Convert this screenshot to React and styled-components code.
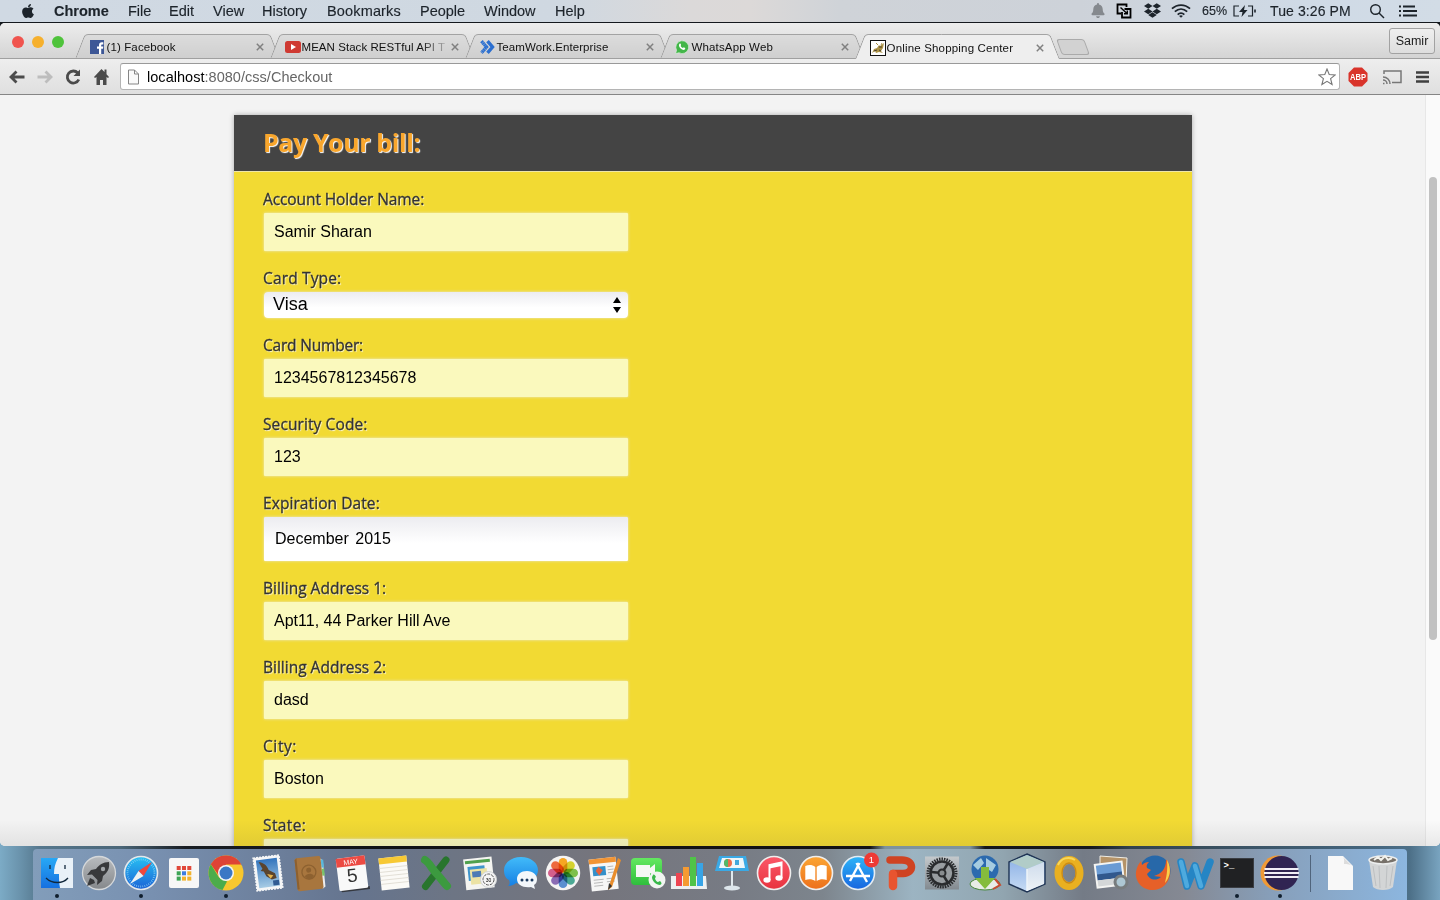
import React from "react";
import styled, { createGlobalStyle } from "styled-components";
import { FaApple, FaDropbox, FaBell } from "react-icons/fa";

const Global = createGlobalStyle`
  *, *::before, *::after { box-sizing: border-box; }
  body { margin: 0; overflow: hidden; font-family: "Liberation Sans", Arial, sans-serif; }
`;

/* ---------- desktop ---------- */
const Desktop = styled.div`
  width: 1440px; height: 900px; overflow: hidden;
  display: flex; flex-direction: column;
  background:
    linear-gradient(#15191e, #15191e) 0 0 / 100% 60px no-repeat,
    linear-gradient(90deg, #7cabc6 0, #6a93ac 20px, #55778d 40px, #4a6678 120px, #171c22 185px, #101216 400px, #131214 870px, #7e939d 885px, #7e939d 970px, #14161a 985px, #15181c 1090px, #31434f 1130px, #456780 1380px, #4d7088 1410px, #79a4c0 1440px);
`;

/* ---------- menu bar ---------- */
const MenuBar = styled.header`
  height: 23px; flex: none; display: flex; align-items: center; padding: 0 22px 1px 20px;
  color: #1d242b; border-bottom: 1px solid #15191e; font-size: 14.5px; white-space: nowrap;
  -webkit-text-stroke: .15px;
  background: linear-gradient(90deg, #d0d9e3 0, #cfd8e1 560px, #dbd9d9 690px, #dcd9d8 750px, #cfd3d8 840px, #cdd2d9 1080px, #cfdae6 1300px, #d2dce6 1440px);
`;
const AppleMark = styled.span`
  display: flex; width: 34px; font-size: 16px;
`;
const MenuItem = styled.span`
  width: ${(p) => p.$w}px; font-weight: ${(p) => (p.$strong ? 700 : 400)};
  letter-spacing: ${(p) => p.$ls || 0}px;
`;
const StatusArea = styled.div`
  margin-left: auto; display: flex; align-items: center;
  svg { display: block; }
`;
const Status = styled.span`
  display: flex; align-items: center; margin-left: ${(p) => p.$gap}px; width: ${(p) => p.$w}px;
  font-size: ${(p) => p.$size || 14}px; letter-spacing: ${(p) => p.$ls || 0}px; color: ${(p) => p.$color || "#1d242b"};
`;

/* ---------- browser window ---------- */
const Window = styled.main`
  height: 823px; flex: none; display: flex; flex-direction: column; background: #f3f3f3;
  border-radius: 5px; overflow: hidden;
`;
const TabStrip = styled.div`
  height: 36px; flex: none; display: flex; align-items: flex-end; padding: 0 5px 0 12px;
  background: linear-gradient(#ededed, #d4d4d4); border-bottom: 1px solid #a0a0a0;
`;
const Lights = styled.div`
  display: flex; gap: 8px; width: 67.5px; height: 22px;
`;
const Light = styled.i`
  width: 12px; height: 12px; border-radius: 50%; background: ${(p) => p.$c};
`;
const Tab = styled.div`
  width: 195px; height: ${(p) => (p.$active ? 25 : 24)}px; margin-bottom: ${(p) => (p.$active ? -1 : 0)}px;
  padding: 2px 7px 0 10px;
  display: flex; align-items: center; font-size: 11.5px; color: #111;
  position: relative; z-index: ${(p) => (p.$active ? 2 : 1)}; white-space: nowrap;
  &::before, &::after {
    content: ""; position: absolute; z-index: -1; top: 0; bottom: 0; width: 56%;
    background: ${(p) => (p.$active ? "#eeeeee" : "linear-gradient(#dcdcdc, #cfcfcf)")};
    border-top: 1px solid #a3a3a3;
  }
  &::before { left: 0; border-left: 1px solid #999; transform: skewX(-21deg); border-top-left-radius: 4px; }
  &::after { right: -1px; border-right: 1px solid #999; transform: skewX(21deg); border-top-right-radius: 4px; }
`;
const TabIcon = styled.span`
  width: 17px; height: 16px; flex: none; display: flex; align-items: center;
`;
const TabTitle = styled.span`
  flex: 1; letter-spacing: ${(p) => p.$ls}px;
  ${(p) => p.$fade && "mask-image: linear-gradient(90deg, #000 118px, transparent 150px);"}
`;
const TabClose = styled.span`
  flex: none; width: 17px; display: flex; justify-content: center; padding-left: 1px;
`;
const NewTab = styled.i`
  width: 28px; height: 16px; margin: 0 0 3px 4px; border: 1px solid #aaa; border-radius: 3px;
  background: #d2d2d2; transform: skewX(20deg);
`;
const Profile = styled.button`
  margin-left: auto; margin-bottom: 4px; width: 46px; height: 26px; padding: 0; border: 1px solid #a2a2a2; border-radius: 3px;
  background: linear-gradient(#efefef, #dedede); font: 12.5px "Liberation Sans", Arial, sans-serif; color: #222;
`;
const Toolbar = styled.div`
  height: 36px; flex: none; display: flex; align-items: center; padding: 0 10px 0 8px;
  background: linear-gradient(#eeeeee, #dfdfdf); border-bottom: 1px solid #858585;
`;
const NavIcons = styled.div`
  width: 112px; display: flex; gap: 10px; align-items: center;
`;
const Omnibox = styled.div`
  width: 1220px; height: 27px; display: flex; align-items: center; padding: 0 3px 0 6px; background: #fff;
  border: 1px solid #b4b4b4; border-top-color: #999; border-radius: 3px; font-size: 14.5px; color: #666;
`;
const Url = styled.span`
  flex: 1; padding-left: 7px; letter-spacing: .03px;
  b { font-weight: 400; color: #000; }
`;
const Extensions = styled.div`
  flex: 1; display: flex; align-items: center; justify-content: space-between; padding-left: 8px;
`;

/* ---------- page ---------- */
const Viewport = styled.div`
  flex: 1; min-height: 0; display: flex; background: #f3f3f3; position: relative;
  &::after {
    content: ""; position: absolute; left: 0; right: 0; bottom: 0; height: 26px;
    background: linear-gradient(transparent, rgba(60, 60, 60, .09));
  }
`;
const Page = styled.div`
  flex: 1; overflow: hidden; padding: 20px 0 0 234px;
`;
const Track = styled.div`
  width: 15px; padding: 82px 0 0 3px; background: #fafafa; border-left: 1px solid #e7e7e7;
`;
const Thumb = styled.div`
  width: 8px; height: 463px; border-radius: 4px; background: #c1c1c1;
`;
const Card = styled.section`
  width: 958px; height: 900px; background: #f2da33; box-shadow: 0 0 5px rgba(0, 0, 0, .3);
`;
const CardHead = styled.h1`
  margin: 0; height: 57px; padding: 0 29px; background: #444; border-bottom: 1px solid #efe6a8;
  font: 700 25px/54px "Open Sans", sans-serif; letter-spacing: -.4px; color: #f9a62c; text-shadow: 1px 1px 1px #fff;
`;
const Form = styled.form`
  padding: 17px 30px; display: flex; flex-direction: column; gap: 17px;
`;
const Field = styled.label`
  display: block; width: 364px;
`;
const Label = styled.span`
  display: block; height: 24px; margin-left: -1px; font: 500 15.5px/21px "Open Sans", sans-serif; letter-spacing: ${(p) => p.$ls}px; white-space: nowrap;
  color: #333; -webkit-text-stroke: .3px #333; text-shadow: 1px 1px 1px rgba(255, 255, 255, .8);
`;
const Value = styled.span`
  height: ${(p) => p.$h}px; display: flex; align-items: center; justify-content: space-between;
  padding: 0 6px 1px ${(p) => (p.$kind === "select" ? 9 : p.$kind === "date" ? 11 : 10)}px;
  font-size: ${(p) => (p.$kind === "select" ? 18 : 16)}px; color: #000;
  word-spacing: ${(p) => (p.$kind === "date" ? 2 : 0)}px;
  border-radius: ${(p) => (p.$kind === "select" ? 4 : 1)}px;
  background: ${(p) => (p.$kind ? "linear-gradient(#ececf0, #fff 60%)" : "#faf9bd")};
  box-shadow: 0 0 3px rgba(235, 235, 220, .95);
`;

/* ---------- dock ---------- */
const DockArea = styled.footer`
  flex: 1; padding: 3px 33px 0 33px;
`;
const Dock = styled.div`
  width: 1374px; height: 51px; display: flex; padding: 3px 0 0 3px; border-radius: 4px 4px 0 0;
  background: linear-gradient(90deg, #829dba 0, #7890b0 120px, #65748e 320px, #6d7584 420px, #75757d 560px, #777b84 700px, #7d858d 790px, #9cb4c2 880px, #91a5b0 970px, #747b86 1050px, #858993 1150px, #879fba 1240px, #8cb6df 1374px);
`;
const DockItem = styled.div`
  width: 42.17px; flex: none; display: flex; flex-direction: column; align-items: center; margin-left: ${(p) => p.$gap || 0}px;
  svg { display: block; overflow: visible; }
`;
const Running = styled.i`
  width: 4px; height: 4px; border-radius: 50%; background: #101e2d;
`;
const Divider = styled.i`
  width: 1px; height: 37px; margin: 3px 0 0 9px; background: #50647c;
`;
const Petal = styled.rect`
  mix-blend-mode: multiply;
`;
const PetalGroup = styled.g`
  isolation: isolate;
`;

const MENUS = [
  ["Chrome", 74, true, 0], ["File", 41], ["Edit", 44], ["View", 49], ["History", 65],
  ["Bookmarks", 93, false, 0.15], ["People", 64], ["Window", 71], ["Help", 40],
];

const FIELDS = [
  { label: "Account Holder Name:", value: "Samir Sharan", h: 38, ls: -0.1 },
  { label: "Card Type:", value: "Visa", h: 26, kind: "select", ls: 0.15 },
  { label: "Card Number:", value: "1234567812345678", h: 38, ls: -0.2 },
  { label: "Security Code:", value: "123", h: 38, ls: 0.1 },
  { label: "Expiration Date:", value: "December 2015", h: 44, kind: "date", ls: 0.08 },
  { label: "Billing Address 1:", value: "Apt11, 44 Parker Hill Ave", h: 38, ls: 0 },
  { label: "Billing Address 2:", value: "dasd", h: 38, ls: 0 },
  { label: "City:", value: "Boston", h: 38, ls: 0.6 },
  { label: "State:", value: "", h: 38, ls: 0.4 },
];

const FacebookIcon = () => (
  <svg width="14" height="14" viewBox="0 0 14 14"><rect width="14" height="14" fill="#3d5796" /><path d="M9 14V8.7H7V6.5h2V5.2C9 3.3 10 2.3 11.8 2.3h1.5v2.1h-1c-.8 0-1.1.4-1.1 1.1v1h2.1l-.3 2.2h-1.8V14z" fill="#fff" /></svg>
);
const YoutubeIcon = () => (
  <svg width="16" height="12" viewBox="0 0 16 12"><rect width="16" height="12" rx="2.5" fill="#cf3a32" /><path d="M6 3l5 3-5 3z" fill="#fff" /></svg>
);
const TeamworkIcon = () => (
  <svg width="15" height="14" viewBox="0 0 15 14" fill="none" stroke="#2b6fd0" strokeWidth="3.4"><path d="M1.5 1.2L6.5 7l-5 5.8" strokeDasharray="1.8 .3" /><path d="M7.5 1.2l5 5.8-5 5.8" /></svg>
);
const WhatsIcon = () => (
  <svg width="14" height="14" viewBox="0 0 14 14"><path d="M.6 13.6l1-3.4A6.4 6.4 0 1 1 4 12.7z" fill="#43b649" stroke="#e4f3e4" strokeWidth=".6" /><path d="M4.5 3.8c.7-.8 1.2-.3 1.7 1.2l-.6.9c.5 1 1.3 1.7 2.3 2.2l.9-.8c1.6.7 1.8 1 1.2 1.9-1 1.2-2.7.8-4.4-.7S3.5 5 4.5 3.8z" fill="#fff" /></svg>
);
const ShopIcon = () => (
  <svg width="16" height="16" viewBox="0 0 16 16"><rect x=".5" y=".5" width="15" height="15" fill="#fff" stroke="#111" /><path d="M2 13l2-4 3-1 2-3 1 1 4-3-1 5-2 3 2 2-4-1-3 1-1-2z" fill="#ad9347" /><path d="M4 11l3-1m2-3l3 0M9 10l2 1" stroke="#4e432b" /><path d="M8 5L6 3m5 2l1-2" stroke="#ad9347" /></svg>
);
const CloseIcon = () => (
  <svg width="8" height="8" viewBox="0 0 8 8" stroke="#808080" strokeWidth="1.5"><path d="M.8.8l6.4 6.4M7.2.8L.8 7.2" /></svg>
);

const TABS = [
  { title: "(1) Facebook", icon: <FacebookIcon />, ls: 0.12 },
  { title: "MEAN Stack RESTful API T", icon: <YoutubeIcon />, ls: 0.05, fade: true },
  { title: "TeamWork.Enterprise", icon: <TeamworkIcon />, ls: 0.08 },
  { title: "WhatsApp Web", icon: <WhatsIcon />, ls: 0.15 },
  { title: "Online Shopping Center", icon: <ShopIcon />, ls: 0.18, active: true },
];

const Sq = ({ children }) => <svg width="42" height="42" viewBox="0 0 42 42">{children}</svg>;
const Grad = ({ id, a, b }) => (
  <linearGradient id={id} x1="0" y1="0" x2="0" y2="1"><stop stopColor={a} /><stop offset="1" stopColor={b} /></linearGradient>
);
const petals = ["#f6a623", "#d5d22f", "#7fc04b", "#4ba994", "#5b8fd0", "#8a6cb4", "#d45f8c", "#ee6a3e"];

const DOCK = [
  ["Finder", true, <Sq><defs><Grad id="fi" a="#27a8f5" b="#1670e0" /></defs><path d="M5 6h32v30H5z" fill="url(#fi)" /><path d="M22 6c-3 6-4 10-4 16h5c0 5 0 9 1 14h13V6z" fill="#e9f1f8" /><path d="M14 13v4m15-4v4" stroke="#12283c" strokeWidth="1.3" /><path d="M10 26c6 6 17 6 22 0" fill="none" stroke="#12283c" strokeWidth="1.3" /></Sq>],
  ["Launchpad", false, <Sq><defs><Grad id="la" a="#b9bcbf" b="#85888b" /></defs><circle cx="21" cy="21" r="16.5" fill="url(#la)" stroke="#d5d8da" strokeWidth="1.3" /><path d="M31 10c-6 0-10 3-13 7l-5 1-4 5 5-.5 5.5 5.5-.5 5 5-4 1-5c4-3 7-7 6-14zM12 26l-3 8 8-3-1-3z" fill="#38393b" /><circle cx="25" cy="17" r="2.2" fill="#a2a5a8" /></Sq>],
  ["Safari", true, <Sq><defs><Grad id="sa" a="#28c1f3" b="#1b62d6" /></defs><circle cx="21" cy="21" r="16.5" fill="url(#sa)" stroke="#e4e8eb" strokeWidth="1.6" /><circle cx="21" cy="21" r="13.5" fill="none" stroke="#9cdcf7" strokeWidth="1.8" strokeDasharray=".6 1.5" /><path d="M32 10L18.5 19l5 5z" fill="#f1473c" /><path d="M10 32l8.5-13 5 5z" fill="#eef1f3" /></Sq>],
  ["Apps", false, <Sq><rect x="6" y="6" width="30" height="30" rx="2" fill="#f7f7f7" />{["#e0483a", "#e0483a", "#e0483a", "#3ca455", "#3d7de0", "#f2b32c", "#3ca455", "#f2b32c", "#f2b32c"].map((c, i) => <rect key={i} x={13.7 + (i % 3) * 5.3} y={14 + Math.floor(i / 3) * 5.3} width="4" height="4" fill={c} />)}</Sq>],
  ["Chrome", true, <Sq><circle cx="21" cy="21" r="17.5" fill="#f7c72e" /><path d="M5.8 12.3A17.5 17.5 0 0 1 36.3 12.5H21l-6.5 12z" fill="#de4435" /><path d="M5.8 12.3L14 25.5l8 4-4.5 8.6A17.5 17.5 0 0 1 5.8 12.3z" fill="#4cac4b" /><circle cx="21" cy="21" r="8" fill="#f4f5f6" /><circle cx="21" cy="21" r="6.5" fill="#3b78c5" /></Sq>],
  ["Mail", false, <Sq><defs><Grad id="ma" a="#3274bd" b="#a7cbe4" /></defs><g transform="rotate(-7 21 21)"><rect x="8" y="4.5" width="26" height="33" fill="#f5f6f7" stroke="#f5f6f7" strokeWidth="1.5" strokeDasharray="2 1" /><rect x="10.5" y="7" width="21" height="28" fill="url(#ma)" /><path d="M13 9c4 1 8 4 9 9l6 4 1 5-5 1-5-4-2-5-3-1 2-2z" fill="#5b442d" /><path d="M20 22l6 2-3 3z" fill="#e5b34b" /><path d="M25 29h6v5h-6z" fill="#315c93" /></g></Sq>],
  ["Contacts", false, <Sq><g transform="rotate(-6 21 21)"><path d="M32 7l3 3v26l-3 2z" fill="#eee" /><path d="M33 9h2.5v8H33z" fill="#59b8dc" /><path d="M33 18h2.5v7H33z" fill="#7ac36a" /><rect x="7" y="5" width="26" height="33" rx="2" fill="#a8763e" /><path d="M7 7v29h2V5z" fill="#8d602f" /><circle cx="20" cy="20" r="7" fill="none" stroke="#8d6130" strokeWidth="1.3" /><circle cx="20" cy="18" r="2.5" fill="#8d6130" /><path d="M15.5 24c2-3 7-3 9 0l-3 3h-3z" fill="#8d6130" /></g></Sq>],
  ["Calendar", false, <Sq><g transform="rotate(-7 21 21)"><path d="M7 36h30v3H9z" fill="#35383f" /><rect x="6.5" y="5" width="29" height="32.5" rx="1.5" fill="#f9f9f9" /><path d="M6.5 5h29v9h-29z" fill="#ec4a43" /><text x="21" y="12.2" fontSize="7" textAnchor="middle" fill="#fff" fontFamily="Liberation Sans">MAY</text><text x="21" y="30" fontSize="19" textAnchor="middle" fill="#333" fontFamily="Liberation Sans">5</text></g></Sq>],
  ["Notes", false, <Sq><g transform="rotate(-6 21 21)"><rect x="7" y="5" width="28" height="32" fill="#fbfaf6" /><path d="M7 5h28v6H7z" fill="#f7c934" /><path d="M7 15h28M7 19h28M7 23h28M7 27h28M7 31h28" stroke="#d8d4ca" strokeWidth=".7" /></g></Sq>],
  ["Excel", false, <Sq><path d="M31 8L10.5 34.5" stroke="#28752d" strokeWidth="7" strokeLinecap="round" /><path d="M10 8c4 2 7 9 11 13s7 9 11 13" fill="none" stroke="#3c9a3f" strokeWidth="8" strokeLinecap="round" /></Sq>],
  ["Previewer", false, <Sq><g transform="rotate(-6 20 20)"><rect x="6.5" y="6" width="28.5" height="31" fill="#f5f5f1" /><path d="M8 8h25v3H8z" fill="#4fa14d" /><path d="M10 14h17v14H10z" fill="#3d94cc" /><path d="M12 17h17v15H12z" fill="#ece3a4" /><path d="M14 19h9v6h-9z" fill="#4d7bb5" /></g><circle cx="30.5" cy="27.5" r="8" fill="#f5f5f5" stroke="#d1d4d5" /><circle cx="30.5" cy="27.5" r="5.5" fill="none" stroke="#555" strokeDasharray="3 1" /><text x="30.5" y="29.5" fontSize="5" textAnchor="middle" fontFamily="Liberation Sans">30</text></Sq>],
  ["Messages", false, <Sq><defs><Grad id="me" a="#42bbf9" b="#1680e4" /></defs><path d="M21 5c10 0 17 6 17 13s-7 14-17 14l-5-1c-2 2-5 3-8 3 2-2 2-4 1-6-4-2-5-6-5-10C4 11 11 5 21 5z" fill="url(#me)" /><path d="M27 19c6 0 10 4 10 8 0 3-1 5-3 6l1 4-4-2c-8 1-14-2-14-8 0-5 4-8 10-8z" fill="#f3f7fb" /><circle cx="22" cy="28" r="1.5" fill="#1b3b60" /><circle cx="27" cy="28" r="1.5" fill="#1b3b60" /><circle cx="32" cy="28" r="1.5" fill="#1b3b60" /></Sq>],
  ["Photos", false, <Sq><circle cx="21" cy="21" r="17.2" fill="#f5f4f3" /><PetalGroup>{petals.map((c, i) => <Petal key={c} x="16.7" y="6" width="8.6" height="14.5" rx="4.3" fill={c} transform={`rotate(${i * 45} 21 21)`} />)}</PetalGroup></Sq>],
  ["Pages", false, <Sq><g transform="rotate(-6 21 21)"><rect x="6" y="6" width="27" height="32" fill="#f6f6f6" /><path d="M6 6h27v5H6z" fill="#f19434" /><rect x="9" y="14" width="13" height="9" fill="#3490ca" /><path d="M15 14l4 4-4 5-3-5z" fill="#e6613b" /><path d="M24 15h6m-6 3h6m-6 3h6M9 27h10m-10 3h9m-9 3h9m4-6h8m-8 3h8" stroke="#b8b8b8" /></g><path d="M34 6l-9 28-1 4 4-3 9-27z" fill="#e98d2c" /><path d="M25 31l-1 7 4-4z" fill="#333" /></Sq>],
  ["FaceTime", false, <Sq><defs><Grad id="fa" a="#63e860" b="#2fbf3d" /></defs><rect x="5" y="6" width="31" height="27" rx="4" fill="url(#fa)" /><path d="M10 13h14v3l5-4v12l-5-3v4H10z" fill="#f4f8f4" /><circle cx="31" cy="28" r="8.5" fill="#f1f5f1" /><path d="M27 23c1-1 2 0 3 2l-1 1c0 2 2 4 3 4l2-1c2 2 2 3 0 4-4 0-8-4-8-8z" fill="#38b84a" /></Sq>],
  ["Numbers", false, <Sq><path d="M3 24h35l1 13H3z" fill="#edf0f1" /><rect x="8" y="21" width="6" height="13" fill="#ed4552" /><rect x="15" y="15" width="6" height="19" fill="#f59a32" /><rect x="22" y="5" width="6" height="29" fill="#50c348" /><rect x="29" y="11" width="6" height="23" fill="#38a4e6" /></Sq>],
  ["Keynote", false, <Sq><path d="M8 4h27l3 15H4z" fill="#3aa9e5" /><path d="M11 6h21l2 10H8z" fill="#eff6f9" /><circle cx="17" cy="11" r="4" fill="#ec6d4a" /><path d="M17 7a4 4 0 0 0 0 8z" fill="#51b969" /><rect x="24" y="8" width="4" height="5" fill="#42a8dd" /><path d="M21 19v17" stroke="#e1e9ed" strokeWidth="2" /><ellipse cx="21" cy="36" rx="8" ry="2.5" fill="#dce5eb" /></Sq>],
  ["iTunes", false, <Sq><defs><Grad id="it" a="#fb5869" b="#e8333e" /></defs><circle cx="21" cy="21" r="16.5" fill="url(#it)" stroke="#eee" strokeWidth="1.6" /><path d="M16.5 28V13l12-2.5V26" stroke="#fff" strokeWidth="2" fill="none" /><path d="M16.5 13l12-2.5v3.5l-12 2.5z" fill="#fff" /><ellipse cx="14" cy="28" rx="3.6" ry="2.8" fill="#fff" /><ellipse cx="26" cy="26" rx="3.6" ry="2.8" fill="#fff" /></Sq>],
  ["iBooks", false, <Sq><defs><Grad id="ib" a="#fba534" b="#ed701c" /></defs><circle cx="21" cy="21" r="16.5" fill="url(#ib)" stroke="#eee" strokeWidth="1.6" /><path d="M20.3 15c-3-2.5-6.5-2.5-10-1v14c3.5-1.2 7-1 10 1zM21.7 15c3-2.5 6.5-2.5 10-1v14c-3.5-1.2-7-1-10 1z" fill="#fff" /></Sq>],
  ["App Store", false, <Sq><defs><Grad id="as" a="#2eb5f8" b="#1765df" /></defs><circle cx="21" cy="21" r="16.5" fill="url(#as)" stroke="#e5edf3" strokeWidth="1.6" /><path d="M22.5 11L13 29M19.5 11L30 30M9 24h24" stroke="#fff" strokeWidth="2.4" fill="none" /><circle cx="34.5" cy="8" r="7.5" fill="#ee3a35" /><text x="34.5" y="11.3" fill="#fff" fontSize="9.5" textAnchor="middle" fontFamily="Liberation Sans">1</text></Sq>],
  ["PowerPoint", false, <Sq><path d="M11 8h12c12 0 13 13 1 13.5H14" stroke="#cf4322" strokeWidth="7.5" strokeLinecap="round" fill="none" /><path d="M14 22v12" stroke="#e8542f" strokeWidth="8.5" strokeLinecap="round" /></Sq>],
  ["Preferences", false, <Sq><defs><Grad id="pr" a="#c4c9cc" b="#838a90" /></defs><rect x="4" y="4.5" width="34" height="33" fill="url(#pr)" /><circle cx="21" cy="21" r="14" fill="none" stroke="#292b2d" strokeWidth="3" strokeDasharray="1.5 1" /><circle cx="21" cy="21" r="11.5" fill="#989da0" stroke="#292b2d" strokeWidth="2.6" /><path d="M21 21L10 20M21 21l6-10M21 21l6 10" stroke="#292b2d" strokeWidth="2.5" /><circle cx="21" cy="21" r="3.5" fill="#888c8e" stroke="#292b2d" strokeWidth="2" /></Sq>],
  ["Downloader", false, <Sq><ellipse cx="21" cy="32" rx="15" ry="6" fill="#e8ece7" stroke="#47883a" /><path d="M31 27l5 6-7 4" stroke="#c94a30" strokeWidth="2" fill="none" /><circle cx="21" cy="17" r="13.5" fill="#2c6aae" /><path d="M9 13l8-7 3 5-6 7zM22 6l10 7-4 7-6-4z" fill="#a6cce0" /><path d="M17 15h8v11h6L21 37 11 26h6z" fill="#85bc3c" /></Sq>],
  ["NetBeans", false, <Sq><defs><Grad id="nl" a="#86ace4" b="#c7dcf4" /><Grad id="nr" a="#cfdcec" b="#eef3f7" /></defs><path d="M21 2l18 8v22l-18 8-18-8V10z" fill="url(#nl)" stroke="#1f3454" strokeWidth="1.4" /><path d="M21 3l17 7-17 7-17-7z" fill="#b1ccc8" /><path d="M21 17l17-7v22l-17 7z" fill="url(#nr)" /><path d="M21 17v22" stroke="#eef4f9" strokeWidth="1.5" /></Sq>],
  ["Outlook", false, <Sq><ellipse cx="21" cy="21" rx="10.5" ry="13" fill="none" stroke="#e9b020" strokeWidth="8" /><ellipse cx="21" cy="21" rx="7" ry="10" fill="none" stroke="#ca8a16" strokeWidth="1.3" /><path d="M10 13c3-7 11-9 17-5" fill="none" stroke="#f8d75a" strokeWidth="2" /></Sq>],
  ["Preview", false, <Sq><path d="M10 4l27 2-1 25-26-2z" fill="#b59368" stroke="#f1eee6" /><g transform="rotate(-7 20 22)"><rect x="5" y="10" width="29" height="25" fill="#f4f4f2" /><rect x="7" y="12" width="25" height="10" fill="#6a9bd4" /><rect x="7" y="21" width="25" height="6" fill="#31588d" /><rect x="7" y="27" width="25" height="6" fill="#d4d7d8" /></g><circle cx="31" cy="30" r="6" fill="#adc7d3" stroke="#777c7e" strokeWidth="3" /></Sq>],
  ["Firefox", false, <Sq><circle cx="23" cy="19" r="15.5" fill="#2768a9" /><path d="M35 8c5 8 4 19-2 25-8 8-22 6-27-3-4-7-2-15 3-21l1 4c2-2 4-3 7-3-2 2-3 4-2 6l4 2-4 4c2 5 8 8 14 3l-7-1c7-2 12-7 12-16z" fill="#e66028" /><path d="M35 8c5 9 3 17-2 23 1-5 3-12 2-23z" fill="#fad047" /></Sq>],
  ["Word", false, <Sq><path d="M7 10l6 24 8-20 6 20 9-24" fill="none" stroke="#2585c4" strokeWidth="7.5" strokeLinecap="round" strokeLinejoin="round" /><path d="M7 10l6 24M21 14l6 20" stroke="#4eaade" strokeWidth="4.5" strokeLinecap="round" /></Sq>],
  ["Terminal", true, <Sq><rect x="4.5" y="6.5" width="33" height="29" fill="#202123" stroke="#3a3d42" /><text x="7.5" y="15.5" fill="#fff" fontSize="9" fontWeight="700" fontFamily="Liberation Mono">&gt;_</text></Sq>],
  ["Eclipse", true, <Sq><circle cx="19" cy="21" r="17.5" fill="#f09a36" /><circle cx="22.5" cy="21" r="17" fill="#302452" /><path d="M5.5 17h34M5 21h35M5.5 25h34" stroke="#f1eef6" strokeWidth="1.9" /></Sq>],
];

const DockSlot = ({ name, running, children, gap }) => (
  <DockItem aria-label={name} $gap={gap}>{children}{running && <Running />}</DockItem>
);

const ToolSvg = ({ children, color = "#4b4b4b" }) => (
  <svg width="18" height="18" viewBox="0 0 18 18" fill="none" stroke={color} strokeWidth="2.8">{children}</svg>
);

export default function App() {
  return (
    <Desktop>
      <Global />
      <MenuBar>
        <AppleMark><FaApple /></AppleMark>
        {MENUS.map(([name, w, strong, ls]) => <MenuItem key={name} $w={w} $strong={strong} $ls={ls}>{name}</MenuItem>)}
        <StatusArea>
          <Status $w={14} $color="#85898e"><FaBell size={15} /></Status>
          <Status $gap={11} $w={16}>
            <svg width="16" height="16" viewBox="0 0 16 16" fill="none" stroke="#000" strokeWidth="1.8"><path d="M5 10.5H1.500v-9h9V4" /><path d="M8.500 6H14.500v8.500H6V9" /><path d="M4.500 4.500l6.500 6M11.300 7.500v3.300H8" strokeWidth="1.4" /></svg>
          </Status>
          <Status $gap={12} $w={17}><FaDropbox size={17} /></Status>
          <Status $gap={10} $w={21}>
            <svg width="20" height="16" viewBox="0 0 21 16" fill="none" stroke="#1d242b" strokeWidth="1.8"><path d="M1 5.5c5.500-5 13.500-5 19 0M4 8.700c4-3.600 9-3.600 13 0M7 11.800c2-2 5-2 7 0" /><path d="M8.500 13.200c1.200-1 2.800-1 4 0l-2 2z" fill="#1d242b" stroke="none" /></svg>
          </Status>
          <Status $gap={10} $w={26} $size={12.5}>65%</Status>
          <Status $gap={5} $w={24}>
            <svg width="24" height="14" viewBox="0 0 24 14" fill="none" stroke="#1d242b" strokeWidth="1.2"><path d="M6 2H1v10h5M15 2h4.500v10H15" /><path d="M12 1L6 8h3.500L8.500 13l6-7H11z" fill="#1d242b" stroke="none" /><path d="M22 5.500v3" strokeWidth="1.6" /></svg>
          </Status>
          <Status $gap={13} $w={82} $size={14} $ls={0.1}>Tue 3:26 PM</Status>
          <Status $gap={17} $w={16}>
            <svg width="16" height="16" viewBox="0 0 16 16" fill="none" stroke="#1d242b" strokeWidth="1.4"><circle cx="6.5" cy="6.5" r="4.8" /><path d="M10 10l5 5" /></svg>
          </Status>
          <Status $gap={14} $w={19}>
            <svg width="19" height="12" viewBox="0 0 19 12" stroke="#1d242b" strokeWidth="1.9"><path d="M0 1.500h2M4 1.500h12M0 6h2M4 6h14M0 10.500h2M4 10.500h14" /></svg>
          </Status>
        </StatusArea>
      </MenuBar>

      <Window>
        <TabStrip>
          <Lights><Light $c="#f0544e" /><Light $c="#f6b02d" /><Light $c="#4fc33b" /></Lights>
          {TABS.map((t) => (
            <Tab key={t.title} $active={t.active}>
              <TabIcon>{t.icon}</TabIcon>
              <TabTitle $ls={t.ls} $fade={t.fade}>{t.title}</TabTitle>
              <TabClose><CloseIcon /></TabClose>
            </Tab>
          ))}
          <NewTab />
          <Profile>Samir</Profile>
        </TabStrip>
        <Toolbar>
          <NavIcons>
            <ToolSvg><path d="M16.500 9H3M8.500 3.500L3 9l5.500 5.500" /></ToolSvg>
            <ToolSvg color="#bdbdbd"><path d="M1.500 9H15M9.500 3.500L15 9l-5.500 5.500" /></ToolSvg>
            <ToolSvg><path d="M14.800 11.500A6 6 0 1 1 13.800 5" /><path d="M16 1.500V8H9.500z" fill="#4b4b4b" stroke="none" /></ToolSvg>
            <ToolSvg><path d="M9.500 1L2 9l1 1 1.500-1v8H8v-5h3v5h3.500V9l1.500 1 1-1-2.500-2.800V1.500h-2v2.600z" fill="#4b4b4b" stroke="none" /></ToolSvg>
          </NavIcons>
          <Omnibox>
            <svg width="13" height="16" viewBox="0 0 13 16" fill="#fafafa" stroke="#858585"><path d="M1.500 1h6l4 4v10h-10zM7.500 1v4h4" /></svg>
            <Url><b>localhost</b>:8080/css/Checkout</Url>
            <svg width="18" height="18" viewBox="0 0 18 18" fill="#fff" stroke="#777" strokeWidth="1.1"><path d="M9 1l2.200 5.500 6 .4-4.600 3.800 1.500 5.800L9 13.300l-5.100 3.200 1.500-5.800L.8 6.900l6-.4z" /></svg>
          </Omnibox>
          <Extensions>
            <svg width="20" height="20" viewBox="0 0 20 20"><path d="M6 .5h8L19.500 6v8L14 19.500H6L.5 14V6z" fill="#d9342b" /><text x="10" y="13.200" fontSize="8.500" fontWeight="700" textAnchor="middle" fill="#fff" textLength="16" lengthAdjust="spacingAndGlyphs" fontFamily="Liberation Sans">ABP</text></svg>
            <svg width="20" height="16" viewBox="0 0 20 16" fill="none" stroke="#777" strokeWidth="1.5"><path d="M2 5V2h17v11.500H10M1 14.500h1.500M1 11c2 0 4 1.500 4 4M1 8c4 0 7 3 7 7" /></svg>
            <svg width="14" height="12" viewBox="0 0 14 12" stroke="#404040" strokeWidth="2.6"><path d="M0 1.500h13M0 6h13M0 10.500h13" /></svg>
          </Extensions>
        </Toolbar>
        <Viewport>
          <Page>
            <Card>
              <CardHead>Pay Your bill:</CardHead>
              <Form>
                {FIELDS.map((f) => (
                  <Field key={f.label}>
                    <Label $ls={f.ls}>{f.label}</Label>
                    <Value $h={f.h} $kind={f.kind}>
                      {f.value}
                      {f.kind === "select" && <svg width="10" height="17" viewBox="0 0 10 17"><path d="M5 1l4 6H1zM5 17l4-6H1z" /></svg>}
                    </Value>
                  </Field>
                ))}
              </Form>
            </Card>
          </Page>
          <Track><Thumb /></Track>
        </Viewport>
      </Window>

      <DockArea>
        <Dock>
          {DOCK.map(([name, running, art]) => <DockSlot key={name} name={name} running={running}>{art}</DockSlot>)}
          <Divider />
          <DockSlot name="Documents" gap={9}><Sq><path d="M8 4h15l10 10v24H8z" fill="#f8f8f8" /><path d="M22 4c3 2 2 6 2 8 3 0 7 0 9 3z" fill="#dcdcdc" /></Sq></DockSlot>
          <DockSlot name="Trash"><Sq><path d="M7 8l4 27c4 4 16 4 20 0l4-27z" fill="#d3d5d6" /><path d="M11 14l3 20M17 14l1 22M25 14l-1 22M31 14l-3 20" stroke="#bdc0c2" /><ellipse cx="21" cy="8" rx="14" ry="4" fill="#77716a" stroke="#eceeee" strokeWidth="1.5" /><path d="M12 8l4-3 3 3 4-4 3 4 4-2" stroke="#f2f2ec" strokeWidth="2" fill="none" /></Sq></DockSlot>
        </Dock>
      </DockArea>
    </Desktop>
  );
}
